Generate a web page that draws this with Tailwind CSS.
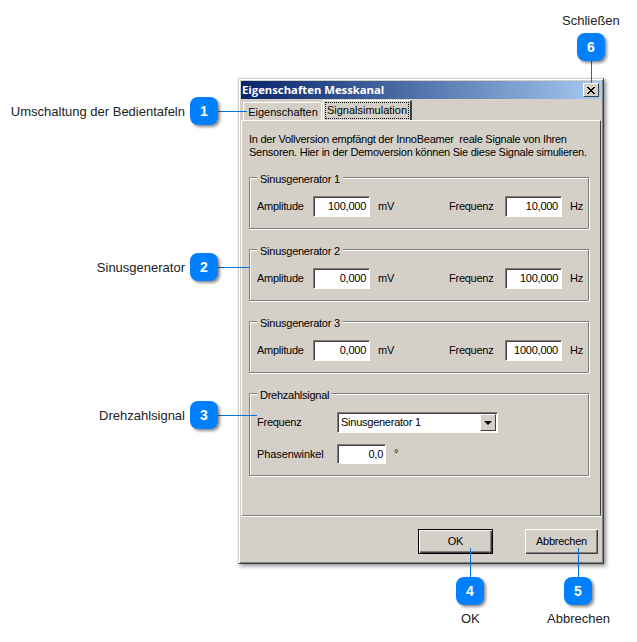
<!DOCTYPE html>
<html lang="de">
<head>
    <meta charset="UTF-8">
    <title>Eigenschaften Messkanal</title>
    <script src="https://cdn.jsdelivr.net/npm/@tailwindcss/browser@4"></script>
</head>
<body class="bg-white">
<div class="relative w-[637px] h-[642px] overflow-hidden font-['Liberation_Sans',Arial,sans-serif] text-[13px] text-[#222]">

    <!-- dialog -->
    <div class="absolute left-[238px] top-[78px] w-[366px] h-[486px] bg-[#d4d0c8] border border-t-[#d4d0c8] border-l-[#d4d0c8] border-r-[#404040] border-b-[#404040] shadow-[inset_1px_1px_0_#fff,inset_-1px_-1px_0_#808080,2px_2px_4px_rgba(0,0,0,0.45)] p-[2px] text-[11px] tracking-[-0.25px] text-black">
        <div class="h-[18px] flex items-center justify-between bg-gradient-to-r from-[#0a246a] to-[#a6caf0] pl-[1px] pr-[2px]">
            <span class="font-['Open_Sans',sans-serif] font-bold text-[11.3px] tracking-normal text-white">Eigenschaften Messkanal</span>
            <span class="w-[16px] h-[14px] bg-[#d4d0c8] border border-t-white border-l-white border-r-[#404040] border-b-[#404040] flex items-center justify-center">
                <svg width="10" height="9" viewBox="0 0 10 9"><path d="M1 1l7 7M2 1l7 7M8 1L1 8M9 1L2 8" stroke="#000" fill="none"/></svg>
            </span>
        </div>

        <!-- tabs -->
        <div class="flex items-end h-[21px] pl-[2px] tracking-normal">
            <div class="h-[18px] w-[79px] pt-[1px] border-t border-l border-white shadow-[inset_-1px_0_0_#fff] flex items-center justify-center">Eigenschaften</div>
            <div class="h-[20px] w-[89px] ml-[1px] border-t border-l border-white border-r-2 border-r-[#404040] flex items-start justify-center pt-[1px]">
                <span class="border border-dotted border-black px-[1px] leading-[15px]">Signalsimulation</span>
            </div>
        </div>

        <!-- panel -->
        <div class="h-[396px] border border-t-white border-l-white border-r-[#404040] border-b-[#808080] px-[7px] pt-[12px]">
            <p class="leading-[13px] whitespace-nowrap">In der Vollversion empfängt der InnoBeamer&nbsp; reale Signale von Ihren<br>Sensoren. Hier in der Demoversion können Sie diese Signale simulieren.</p>

            <div class="relative mt-[18px] h-[52px] w-[340px] border border-[#808080] shadow-[inset_1px_1px_0_#fff,1px_1px_0_#fff] grid grid-cols-[56px_57px_79px_56px_57px_auto] items-center pl-[7px] pt-[6px]">
                <span class="absolute left-[7px] -top-[6px] bg-[#d4d0c8] px-[3px] leading-[14px]">Sinusgenerator 1</span>
                <span>Amplitude</span>
                <span class="h-[21px] bg-white border border-t-[#808080] border-l-[#808080] border-r-white border-b-white shadow-[inset_1px_1px_0_#404040] text-right pr-[3px] leading-[19px]">100,000</span>
                <span class="pl-[8px]">mV</span>
                <span>Frequenz</span>
                <span class="h-[21px] bg-white border border-t-[#808080] border-l-[#808080] border-r-white border-b-white shadow-[inset_1px_1px_0_#404040] text-right pr-[3px] leading-[19px]">10,000</span>
                <span class="pl-[8px]">Hz</span>
            </div>

            <div class="relative mt-[20px] h-[52px] w-[340px] border border-[#808080] shadow-[inset_1px_1px_0_#fff,1px_1px_0_#fff] grid grid-cols-[56px_57px_79px_56px_57px_auto] items-center pl-[7px] pt-[6px]">
                <span class="absolute left-[7px] -top-[6px] bg-[#d4d0c8] px-[3px] leading-[14px]">Sinusgenerator 2</span>
                <span>Amplitude</span>
                <span class="h-[21px] bg-white border border-t-[#808080] border-l-[#808080] border-r-white border-b-white shadow-[inset_1px_1px_0_#404040] text-right pr-[3px] leading-[19px]">0,000</span>
                <span class="pl-[8px]">mV</span>
                <span>Frequenz</span>
                <span class="h-[21px] bg-white border border-t-[#808080] border-l-[#808080] border-r-white border-b-white shadow-[inset_1px_1px_0_#404040] text-right pr-[3px] leading-[19px]">100,000</span>
                <span class="pl-[8px]">Hz</span>
            </div>

            <div class="relative mt-[20px] h-[52px] w-[340px] border border-[#808080] shadow-[inset_1px_1px_0_#fff,1px_1px_0_#fff] grid grid-cols-[56px_57px_79px_56px_57px_auto] items-center pl-[7px] pt-[6px]">
                <span class="absolute left-[7px] -top-[6px] bg-[#d4d0c8] px-[3px] leading-[14px]">Sinusgenerator 3</span>
                <span>Amplitude</span>
                <span class="h-[21px] bg-white border border-t-[#808080] border-l-[#808080] border-r-white border-b-white shadow-[inset_1px_1px_0_#404040] text-right pr-[3px] leading-[19px]">0,000</span>
                <span class="pl-[8px]">mV</span>
                <span>Frequenz</span>
                <span class="h-[21px] bg-white border border-t-[#808080] border-l-[#808080] border-r-white border-b-white shadow-[inset_1px_1px_0_#404040] text-right pr-[3px] leading-[19px]">1000,000</span>
                <span class="pl-[8px]">Hz</span>
            </div>

            <div class="relative mt-[20px] h-[83px] w-[340px] border border-[#808080] shadow-[inset_1px_1px_0_#fff,1px_1px_0_#fff] pl-[7px] pt-[18px]">
                <span class="absolute left-[7px] -top-[6px] bg-[#d4d0c8] px-[3px] leading-[14px]">Drehzahlsignal</span>
                <div class="flex items-center">
                    <span class="w-[80px]">Frequenz</span>
                    <div class="w-[161px] h-[21px] bg-white border border-t-[#808080] border-l-[#808080] border-r-white border-b-white shadow-[inset_1px_1px_0_#404040] flex items-center justify-between pl-[3px] pr-[1px]">
                        <span>Sinusgenerator 1</span>
                        <span class="w-[16px] h-[17px] bg-[#d4d0c8] border border-t-white border-l-white border-r-[#404040] border-b-[#404040] flex items-center justify-center">
                            <svg width="8" height="4" viewBox="0 0 8 4"><path d="M0 0h8L4 4z" fill="#000"/></svg>
                        </span>
                    </div>
                </div>
                <div class="flex items-center mt-[11px]">
                    <span class="w-[80px] tracking-[-0.1px]">Phasenwinkel</span>
                    <span class="w-[49px] h-[20px] bg-white border border-t-[#808080] border-l-[#808080] border-r-white border-b-white shadow-[inset_1px_1px_0_#404040] text-right pr-[2px] leading-[18px]">0,0</span>
                    <span class="ml-[8px] -mt-[2px]">°</span>
                </div>
            </div>
        </div>

        <!-- buttons -->
        <div class="flex justify-end gap-[32px] pt-[12px] pr-[3px] border-t border-white">
            <div class="w-[75px] h-[25px] border border-black shadow-[inset_1px_1px_0_#fff,inset_-1px_-1px_0_#404040,inset_-2px_-2px_0_#808080] flex items-center justify-center">OK</div>
            <div class="w-[73px] h-[25px] shadow-[inset_1px_1px_0_#fff,inset_-1px_-1px_0_#404040,inset_-2px_-2px_0_#808080] flex items-center justify-center">Abbrechen</div>
        </div>
    </div>

    <!-- callout lines -->
    <div class="absolute left-[218px] top-[111px] w-[29px] h-px bg-[#0070d8]"></div>
    <div class="absolute left-[218px] top-[267px] w-[31px] h-px bg-[#0070d8]"></div>
    <div class="absolute left-[218px] top-[415px] w-[39px] h-px bg-[#0070d8]"></div>
    <div class="absolute left-[470px] top-[548px] w-px h-[29px] bg-[#0070d8]"></div>
    <div class="absolute left-[578px] top-[548px] w-px h-[29px] bg-[#0070d8]"></div>
    <div class="absolute left-[591px] top-[61px] w-px h-[22px] bg-[#0070d8]"></div>

    <!-- callout badges -->
    <div class="absolute left-[190px] top-[97px] w-[28px] h-[28px] rounded-[8px] bg-[#007fff] shadow-[2px_2px_3px_rgba(0,0,0,0.45)] text-white text-[14px] font-bold flex items-center justify-center">1</div>
    <div class="absolute left-[190px] top-[253px] w-[28px] h-[28px] rounded-[8px] bg-[#007fff] shadow-[2px_2px_3px_rgba(0,0,0,0.45)] text-white text-[14px] font-bold flex items-center justify-center">2</div>
    <div class="absolute left-[190px] top-[401px] w-[28px] h-[28px] rounded-[8px] bg-[#007fff] shadow-[2px_2px_3px_rgba(0,0,0,0.45)] text-white text-[14px] font-bold flex items-center justify-center">3</div>
    <div class="absolute left-[456px] top-[577px] w-[28px] h-[28px] rounded-[8px] bg-[#007fff] shadow-[2px_2px_3px_rgba(0,0,0,0.45)] text-white text-[14px] font-bold flex items-center justify-center">4</div>
    <div class="absolute left-[564px] top-[577px] w-[28px] h-[28px] rounded-[8px] bg-[#007fff] shadow-[2px_2px_3px_rgba(0,0,0,0.45)] text-white text-[14px] font-bold flex items-center justify-center">5</div>
    <div class="absolute left-[577px] top-[33px] w-[28px] h-[28px] rounded-[8px] bg-[#007fff] shadow-[2px_2px_3px_rgba(0,0,0,0.45)] text-white text-[14px] font-bold flex items-center justify-center">6</div>

    <!-- callout labels -->
    <div class="absolute right-[452px] top-[104px] leading-[16px] whitespace-nowrap">Umschaltung der Bedientafeln</div>
    <div class="absolute right-[452px] top-[260px] leading-[16px] whitespace-nowrap">Sinusgenerator</div>
    <div class="absolute right-[452px] top-[408px] leading-[16px] whitespace-nowrap">Drehzahlsignal</div>
    <div class="absolute left-[461px] top-[611px] leading-[16px] whitespace-nowrap">OK</div>
    <div class="absolute left-[547px] top-[611px] leading-[16px] whitespace-nowrap">Abbrechen</div>
    <div class="absolute left-[562px] top-[13px] leading-[16px] whitespace-nowrap">Schließen</div>
</div>
</body>
</html>
